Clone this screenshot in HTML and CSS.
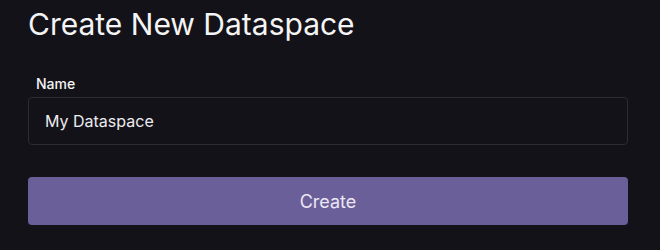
FILE: index.html
```html
<!DOCTYPE html>
<html lang="en">
<head>
    <meta charset="UTF-8">
    <meta name="viewport" content="width=device-width, initial-scale=1.0">
    <title>Create New Dataspace</title>
    <link rel="stylesheet" href="styles.css">
</head>
<body>
    <div class="container">
        <h1>Create New Dataspace</h1>

        <form class="create-form">
            <div class="field">
                <label for="dataspaceName" class="field-label">Name</label>
                <input type="text" id="dataspaceName" class="field-input" value="My Dataspace">
            </div>
            <button type="button" class="create-button">Create</button>
        </form>
    </div>
</body>
</html>
```

FILE: styles.css
```css
body {
    font-family: Inter, "Noto Sans", sans-serif;
    margin: 0;
    background-color: #131218;
    color: #f4f4f5;
}

.container {
    padding: 4px 32px 0 28px;
}

h1 {
    font-size: 30px;
    font-weight: 400;
    margin: 0 0 30px 0;
    line-height: 40px;
}

.field {
    display: flex;
    flex-direction: column;
    gap: 3px;
    margin-bottom: 32px;
}

.field-label {
    font-size: 14px;
    font-weight: 500;
    padding-left: 8px;
    line-height: 20px;
}

.field-input {
    font-family: inherit;
    font-size: 16px;
    color: #ececef;
    background-color: #131218;
    border: 1px solid #2c2b31;
    border-radius: 4px;
    height: 48px;
    box-sizing: border-box;
    padding: 0 16px;
    outline: none;
}

.create-button {
    display: block;
    width: 100%;
    height: 48px;
    font-family: inherit;
    font-size: 18px;
    color: #ebe6f5;
    background-color: #6b5f99;
    border: none;
    border-radius: 4px;
    cursor: pointer;
}
```
